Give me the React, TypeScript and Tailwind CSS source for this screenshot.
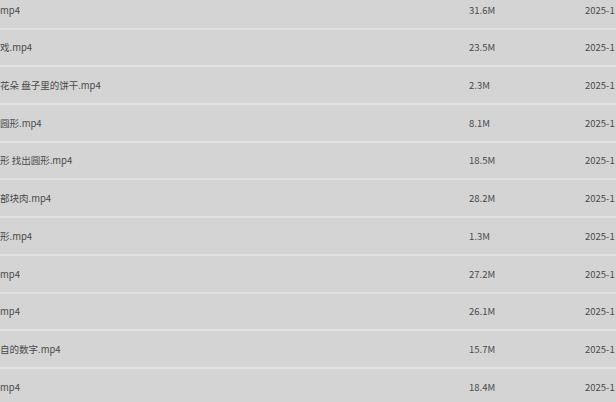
import React from 'react';

type FileRow = {
  name: string;
  size: string;
  date: string;
};

const FILES: FileRow[] = [
  { name: 'mp4', size: '31.6M', date: '2025-1' },
  { name: '戏.mp4', size: '23.5M', date: '2025-1' },
  { name: '花朵 盘子里的饼干.mp4', size: '2.3M', date: '2025-1' },
  { name: '圆形.mp4', size: '8.1M', date: '2025-1' },
  { name: '形 找出圆形.mp4', size: '18.5M', date: '2025-1' },
  { name: '部块肉.mp4', size: '28.2M', date: '2025-1' },
  { name: '形.mp4', size: '1.3M', date: '2025-1' },
  { name: 'mp4', size: '27.2M', date: '2025-1' },
  { name: 'mp4', size: '26.1M', date: '2025-1' },
  { name: '自的数字.mp4', size: '15.7M', date: '2025-1' },
  { name: 'mp4', size: '18.4M', date: '2025-1' },
];

export default function App() {
  return (
    <div
      className="w-[616px] h-[402px] overflow-hidden bg-[#e2e2e2] text-[9.5px] text-[#4a4a4a]"
      style={{ fontFamily: '"Noto Sans CJK SC", "Noto Sans", sans-serif' }}
    >
      <div className="-mt-[10px]">
        {FILES.map((f, i) => (
          <div
            key={i}
            className="grid grid-cols-[469px_116px_1fr] items-center h-[37.7px] border-t-2 border-[#e1e1e1] bg-[#d4d4d4] whitespace-nowrap"
          >
            <div className="overflow-hidden">{f.name}</div>
            <div>{f.size}</div>
            <div className="overflow-hidden">{f.date}</div>
          </div>
        ))}
      </div>
    </div>
  );
}
